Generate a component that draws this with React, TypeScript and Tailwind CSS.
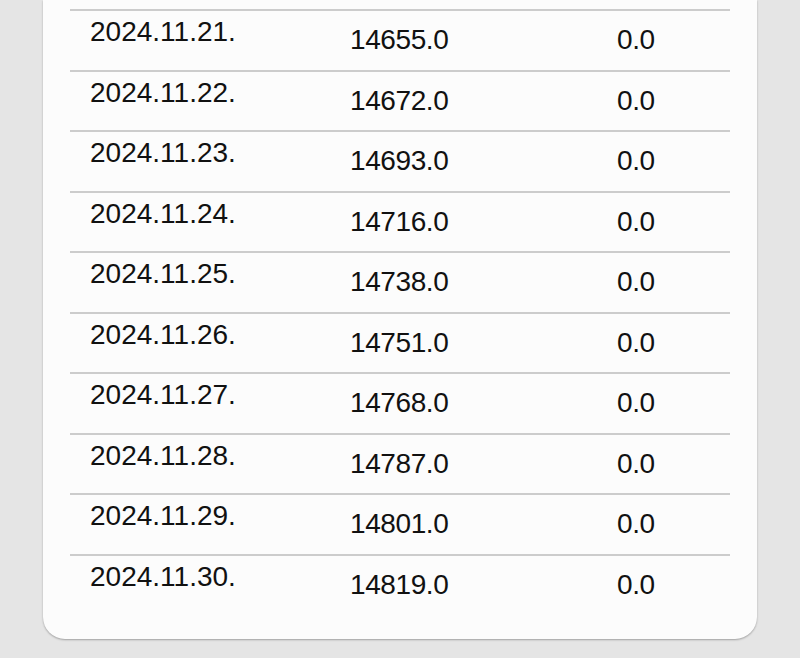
const rows = [
  ['2024.11.21.', '14655.0', '0.0'],
  ['2024.11.22.', '14672.0', '0.0'],
  ['2024.11.23.', '14693.0', '0.0'],
  ['2024.11.24.', '14716.0', '0.0'],
  ['2024.11.25.', '14738.0', '0.0'],
  ['2024.11.26.', '14751.0', '0.0'],
  ['2024.11.27.', '14768.0', '0.0'],
  ['2024.11.28.', '14787.0', '0.0'],
  ['2024.11.29.', '14801.0', '0.0'],
  ['2024.11.30.', '14819.0', '0.0'],
];

const App = () => {
  return (
    <div className="min-h-[658px] bg-[#e5e5e5] px-[43px] pb-[18px] font-['Liberation_Sans',Arial,sans-serif] text-[#111]">
      <div className="rounded-b-[22px] bg-[#fcfcfc] px-[27px] pt-[9px] pb-[25px] shadow-[0_1px_2px_rgba(0,0,0,0.3)]">
        {rows.map(([date, value, diff]) => (
          <div
            key={date}
            className="grid h-[60.55px] grid-cols-[280px_267px_1fr] border-t-2 border-[#cccccc] text-[28px] leading-[31px]"
          >
            <div className="pl-5 pt-[5px]">{date}</div>
            <div className="pt-[13px] tracking-[-0.4px]">{value}</div>
            <div className="pt-[13px] tracking-[-0.4px]">{diff}</div>
          </div>
        ))}
      </div>
    </div>
  );
};

export default App;
